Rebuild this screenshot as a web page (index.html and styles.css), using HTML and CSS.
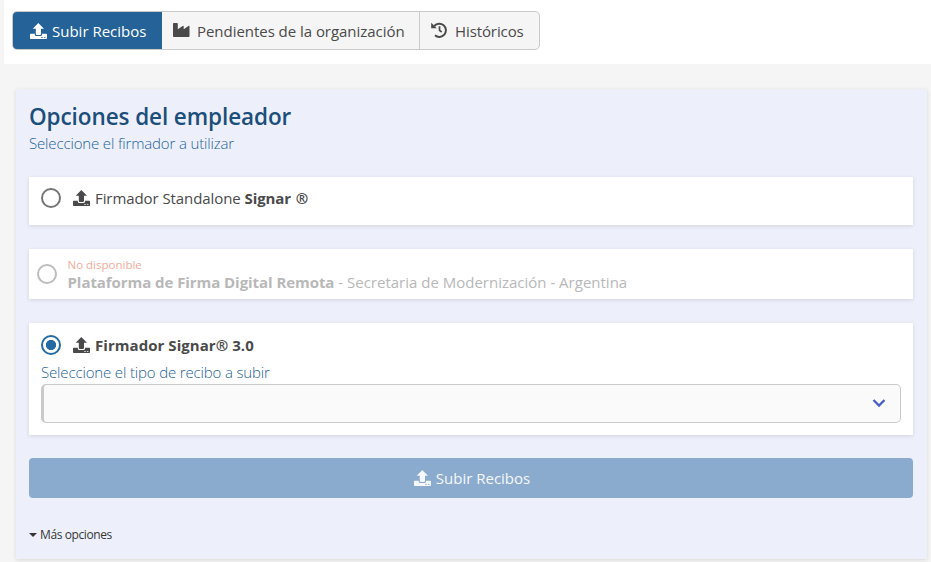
FILE: index.html
```html
<!DOCTYPE html>
<html lang="es">
<head>
<meta charset="utf-8">
<title>Subir Recibos</title>
<link rel="stylesheet" href="styles.css">
</head>
<body>
<svg class="defs" aria-hidden="true">
  <symbol id="upload" viewBox="0 0 17 16">
    <path d="M8.3 0 14 5.8H11V11Q11 12 10 12H6.8Q5.8 12 5.8 11V5.8H2.7Z"/>
    <path fill-rule="evenodd" d="M.7 10.7H4.8V11.4Q4.8 13 6.4 13H10.4Q12 13 12 11.4V10.7H16.2Q17 10.7 17 11.5V15.2Q17 16 16.2 16H.8Q0 16 0 15.2V11.5Q0 10.7.7 10.7ZM11.2 14.2V15H12.8V14.2ZM13.9 14.2V15H15.4V14.2Z"/>
  </symbol>
  <symbol id="industry" viewBox="0 0 17 15">
    <path d="M.8 0H4Q4.8 0 4.8.8V6.2L9.6 3Q10.7 2.4 10.7 3.6V6.2L15.4 3Q16.5 2.4 16.5 3.6V13.2Q16.5 14 15.7 14H.8Q0 14 0 13.2V.8Q0 0 .8 0Z"/>
  </symbol>
  <symbol id="history" viewBox="0 0 16 16">
    <path d="M3.3 4A6.6 6.6 0 1 1 4 13.3" fill="none" stroke="currentColor" stroke-width="2"/>
    <path d="M.2.8V6.2H5.8Z"/>
    <path d="M8.5 4.2V8.3L10.7 10" fill="none" stroke="currentColor" stroke-width="1.7"/>
  </symbol>
</svg>
<header class="topbar">
  <nav class="tabs">
    <a class="tab tab-active"><svg class="icon"><use href="#upload"/></svg><span>Subir Recibos</span></a>
    <a class="tab tab-org"><svg class="icon"><use href="#industry"/></svg><span>Pendientes de la organización</span></a>
    <a class="tab tab-history"><svg class="icon"><use href="#history"/></svg><span>Históricos</span></a>
  </nav>
</header>
<main class="panel">
  <h1>Opciones del empleador</h1>
  <p class="hint">Seleccione el firmador a utilizar</p>
  <section class="card standalone">
    <span class="radio"></span><svg class="icon"><use href="#upload"/></svg>
    <span class="label">Firmador Standalone <b>Signar <span class="reg">®</span></b></span>
  </section>
  <section class="card remote">
    <span class="radio"></span>
    <div class="remote-text"><div class="unavailable">No disponible</div><div class="remote-name"><b>Plataforma de Firma Digital Remota</b> - Secretaria de Modernización - Argentina</div></div>
  </section>
  <section class="card signar">
    <div class="option"><span class="radio checked"></span><svg class="icon"><use href="#upload"/></svg><b class="label">Firmador Signar<span class="reg">®</span> 3.0</b></div>
    <p class="hint type-hint">Seleccione el tipo de recibo a subir</p>
    <div class="select"><svg class="chevron" viewBox="0 0 14 10"><path d="M1.5 2 7 7.5 12.5 2"/></svg></div>
  </section>
  <button class="submit"><svg class="icon"><use href="#upload"/></svg><span>Subir Recibos</span></button>
  <div class="more"><span class="caret"></span>Más opciones</div>
</main>
</body>
</html>
```
FILE: styles.css
```css
* { box-sizing: border-box; }
body {
  margin: 0;
  height: 562px;
  overflow: hidden;
  background: #f5f5f5;
  color: #4a4a4a;
  font: 15px/24px "Open Sans", "Noto Sans", sans-serif;
}
h1, p { margin: 0; }
.defs { display: none; }
.icon { width: 17px; height: 16px; fill: currentColor; flex: none; }
.topbar { height: 64px; margin-left: 4px; padding: 11px 8px; background: #fff; }
.tabs {
  display: flex;
  width: 528px;
  height: 39px;
  border: 1px solid #cacaca;
  border-radius: 5px;
  background: #f5f5f5;
  overflow: hidden;
}
.tab { display: flex; align-items: center; white-space: nowrap; }
.tab-active { width: 149px; padding-left: 17px; gap: 5px; background: #256297; color: #fff; }
.tab-org { width: 258px; padding-left: 11px; gap: 7px; border-right: 1px solid #cacaca; letter-spacing: -.04px; }
.tab-org .icon { height: 15px; margin-bottom: 1px; }
.tab-history { padding-left: 11px; gap: 8px; letter-spacing: -.1px; }
.tab-history .icon { width: 16px; margin-bottom: 2px; }
.panel {
  width: 911px;
  height: 470px;
  margin: 25px 0 0 16px;
  padding: 13px 14px 0 13px;
  background: #edf0fa;
  box-shadow: 0 1px 4px rgba(0, 0, 0, .12);
}
h1 { font-size: 22.5px; line-height: 30px; font-weight: 600; letter-spacing: -.09px; color: #1c4e7b; white-space: nowrap; }
.hint { margin-top: -1px; font-weight: 300; letter-spacing: -.15px; color: #256297; line-height: 24px; white-space: nowrap; }
.card { background: #fff; box-shadow: 0 1px 4px rgba(0, 0, 0, .12); }
.standalone { display: flex; height: 48px; margin-top: 22px; padding: 11px 12px; }
.standalone .label { letter-spacing: -.08px; }
.radio { flex: none; width: 20px; height: 20px; border: 2px solid #757575; border-radius: 50%; }
.radio.checked { border-color: #256ba3; background: radial-gradient(circle, #256ba3 0 4.8px, #fff 5.4px); }
.card .icon { margin: 2px 5px 0 12px; }
.label { line-height: 24px; margin-top: -2px; white-space: nowrap; }
.reg { font-size: 15px; line-height: 1; }
.standalone .reg { margin-left: 1px; }
.remote { display: flex; height: 50px; margin-top: 24px; padding: 8px; }
.remote .radio { margin-top: 7px; border-color: #bdbdbd; }
.remote-text { margin-left: 10.5px; color: #b8b8b8; white-space: nowrap; }
.unavailable { font-size: 11.5px; line-height: 16px; color: #f3ab9c; }
.remote-name { line-height: 20px; margin-top: -1px; }
.remote-name b { letter-spacing: -.06px; }
.signar { height: 112px; margin-top: 24px; padding: 12px; }
.option { display: flex; height: 20px; }
.option .label { letter-spacing: .05px; }
.type-hint { margin: 5px 0 0; height: 24px; }
.select {
  display: flex;
  align-items: center;
  justify-content: flex-end;
  height: 39px;
  padding-right: 14px;
  border: 1px solid #cacaca;
  border-left-width: 3px;
  border-radius: 5px;
  background: #fafafa;
}
.chevron { width: 14px; height: 10px; margin-bottom: 1px; fill: none; stroke: #485fc7; stroke-width: 2.3; }
.submit {
  display: flex;
  align-items: center;
  justify-content: center;
  gap: 5px;
  width: 100%;
  height: 40px;
  margin-top: 23px;
  padding: 0 0 1px 2px;
  border: 0;
  border-radius: 4px;
  background: #8aabcd;
  color: #f5f7fb;
  font: inherit;
}
.more { display: flex; align-items: center; gap: 4px; margin-top: 25px; font-size: 12px; letter-spacing: -.4px; color: #363636; }
.caret { border: 3.5px solid transparent; border-width: 4px 4px 0; border-top-color: #363636; margin-right: -1px; }
```
